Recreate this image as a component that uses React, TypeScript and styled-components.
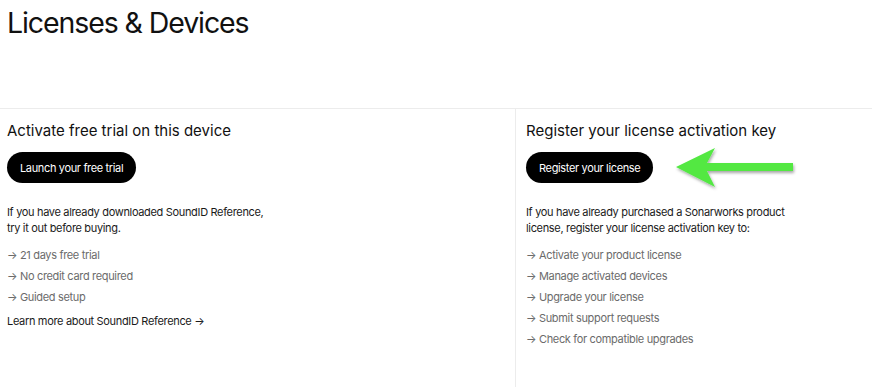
import React from "react";
import styled, { createGlobalStyle } from "styled-components";

const Global = createGlobalStyle`
  html, body { margin: 0; padding: 0; background: #fff; }
  body { font-family: Inter, "Noto Sans", sans-serif; color: #111; }
  * { box-sizing: border-box; }
`;

const Page = styled.div`
  width: 872px;
  height: 387px;
  overflow: hidden;
  position: relative;
`;

const Header = styled.header`
  height: 109px;
  padding: 5px 7px 0;
  border-bottom: 1px solid #ececec;
`;

const Title = styled.h1`
  margin: 0;
  font-size: 28.5px;
  font-weight: 400;
  line-height: 36px;
  letter-spacing: -1.1px;
  color: #111;
`;

const Columns = styled.div`
  display: grid;
  grid-template-columns: 515px 1fr;
  height: 278px;
`;

const Column = styled.section<{ $divider?: boolean }>`
  padding: 11px 0 0 ${(p) => (p.$divider ? "10px" : "7px")};
  border-left: ${(p) => (p.$divider ? "1px solid #ececec" : "none")};
  display: flex;
  flex-direction: column;
  align-items: flex-start;
`;

const Heading = styled.h2`
  margin: 0;
  font-size: 15px;
  font-weight: 400;
  line-height: 22px;
  color: #111;
`;

const PillButton = styled.button`
  margin-top: 10px;
  height: 31px;
  padding: 0 13px;
  border: none;
  border-radius: 16px;
  background: #000;
  color: #fff;
  font-family: Inter, "Noto Sans", sans-serif;
  font-size: 11px;
  letter-spacing: -0.35px;
  font-weight: 400;
  cursor: pointer;
`;

const Paragraph = styled.p`
  margin: 22px 0 0;
  font-size: 11px;
  letter-spacing: -0.33px;
  line-height: 15.5px;
  color: #1a1a1a;
`;

const List = styled.ul`
  list-style: none;
  margin: 9px 0 0;
  padding: 0;
`;

const Item = styled.li`
  font-size: 11px;
  letter-spacing: -0.33px;
  line-height: 21px;
  color: #6b6b6b;
`;

const LearnLink = styled.a`
  margin-top: 5px;
  font-size: 11px;
  letter-spacing: -0.33px;
  line-height: 16px;
  color: #1a1a1a;
  text-decoration: none;
`;

const ArrowMark = styled.svg`
  position: absolute;
  left: 670px;
  top: 142px;
  overflow: visible;
`;

const trial = ["21 days free trial", "No credit card required", "Guided setup"];
const license = [
  "Activate your product license",
  "Manage activated devices",
  "Upgrade your license",
  "Submit support requests",
  "Check for compatible upgrades",
];

export default function App() {
  return (
    <Page>
      <Global />
      <Header>
        <Title>Licenses &amp; Devices</Title>
      </Header>
      <Columns>
        <Column>
          <Heading>Activate free trial on this device</Heading>
          <PillButton>Launch your free trial</PillButton>
          <Paragraph>
            If you have already downloaded SoundID Reference,
            <br />
            try it out before buying.
          </Paragraph>
          <List>
            {trial.map((t) => (
              <Item key={t}>→ {t}</Item>
            ))}
          </List>
          <LearnLink href="#">Learn more about SoundID Reference →</LearnLink>
        </Column>
        <Column $divider>
          <Heading>Register your license activation key</Heading>
          <PillButton>Register your license</PillButton>
          <Paragraph>
            If you have already purchased a Sonarworks product
            <br />
            license, register your license activation key to:
          </Paragraph>
          <List>
            {license.map((t) => (
              <Item key={t}>→ {t}</Item>
            ))}
          </List>
        </Column>
      </Columns>
      <ArrowMark width="130" height="55" viewBox="0 0 130 55">
        <defs>
          <filter id="sh" x="-20%" y="-30%" width="140%" height="160%">
            <feDropShadow dx="1" dy="2" stdDeviation="1.5" floodColor="#000" floodOpacity="0.35" />
          </filter>
        </defs>
        <path
          d="M6 25 L45 6 L37 21 L123 21 L123 29 L37 29 L45 45 Z"
          fill="#52e843"
          filter="url(#sh)"
        />
      </ArrowMark>
    </Page>
  );
}
